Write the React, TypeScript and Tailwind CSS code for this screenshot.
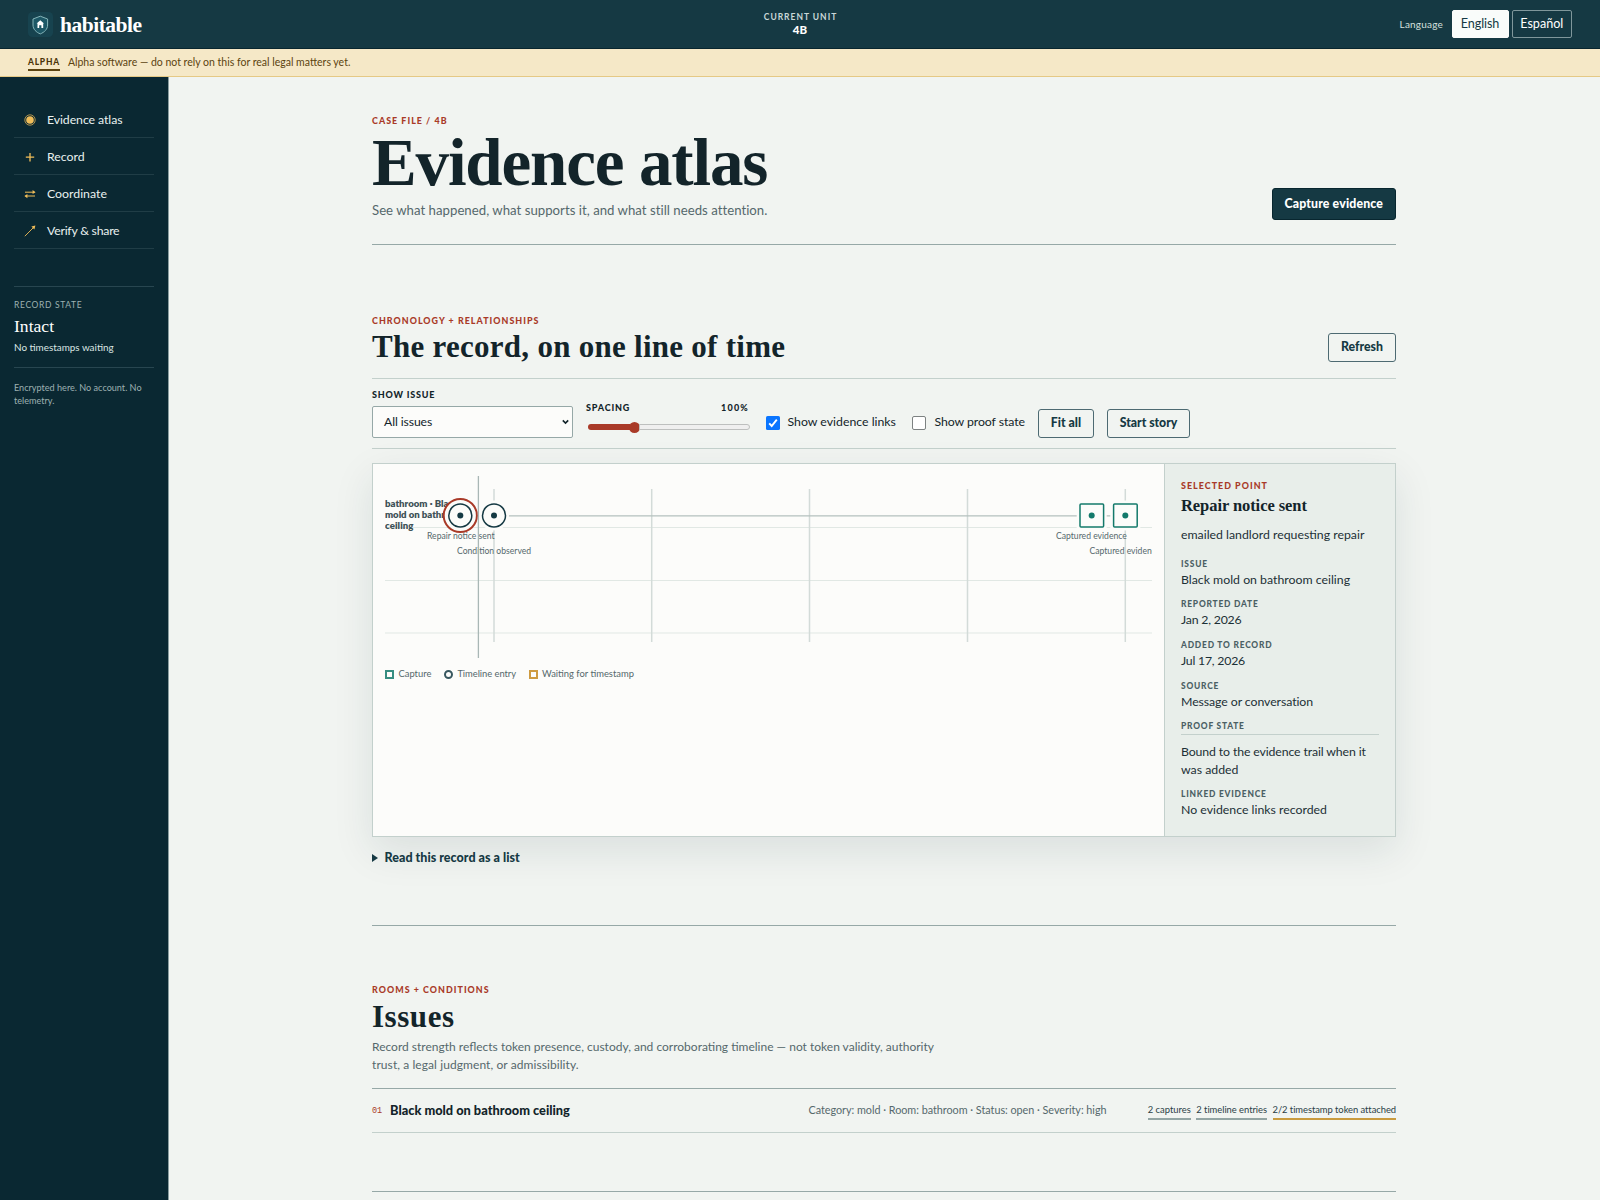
import React from "react";

const serif = "font-['Liberation_Serif',serif]";

function Eyebrow({ children, className = "" }: { children: React.ReactNode; className?: string }) {
  return (
    <p className={`h-3 text-[8.9px] leading-3 font-black tracking-[1.04px] whitespace-nowrap text-[#a93a28] uppercase ${className}`}>
      {children}
    </p>
  );
}

function Logo() {
  return (
    <svg className="size-[25px]" viewBox="0 0 25 25" fill="none">
      <rect width="25" height="25" rx="4.5" fill="#17434f" />
      <path d="M12.3 4.2 L19.6 7 V13 C19.6 17.3 16.4 20.2 12.3 21.9 C8.2 20.2 5 17.3 5 13 V7 Z" fill="#1d5866" stroke="#86b5b9" strokeWidth="1" strokeLinejoin="round" />
      <path d="M12.3 8.3 L16 11.6 H15.2 V16 H13.4 V13.2 H11.2 V16 H9.5 V11.6 H8.6 Z" fill="#fff" />
    </svg>
  );
}

function Header() {
  return (
    <header className="flex h-[49px] shrink-0 items-center justify-between border-b border-[#08262f] bg-[#153943] pr-[28px] pl-[28px] text-white">
      <div className="flex flex-1 items-center">
        <Logo />
        <span className={`ml-[7px] pt-px text-[21.5px] leading-6 font-bold tracking-[-0.5px] ${serif}`}>habitable</span>
      </div>
      <div className="flex flex-col items-center pb-[2px]">
        <span className="pl-px text-[8.5px] leading-3 font-bold tracking-[0.98px] text-[#c9d8d8]">CURRENT UNIT</span>
        <span className="text-[11.5px] leading-[13px] font-black">4B</span>
      </div>
      <div className="flex flex-1 items-center justify-end">
        <span className="mr-[8.5px] text-[10px] tracking-[0.2px] text-[#d5e0df]">Language</span>
        <button className="mr-[3px] h-7 w-[57px] rounded-[2px] border border-[#fcfcfa] bg-[#f9fcfa] pt-px text-[12.6px] tracking-[-0.1px] text-[#153943]">English</button>
        <button className="h-7 w-[60.5px] rounded-[2px] border border-[#7f979b] pt-px text-[12.6px] text-white">Español</button>
      </div>
    </header>
  );
}

const navIcons = {
  atlas: (
    <>
      <circle cx="6" cy="6" r="3.8" fill="#f0bd59" stroke="none" />
      <circle cx="6" cy="6" r="5.2" strokeWidth="0.7" />
    </>
  ),
  plus: <path d="M6 2 V10.4 M1.8 6.2 H10.2" strokeWidth="1.3" />,
  swap: (
    <>
      <path d="M1 4.2 H10.5 M11 8 H1.5" strokeWidth="1" />
      <path d="M8.6 1.9 L11.6 4.2 L8.6 6.1 Z M3.4 6.1 L0.4 8 L3.4 10.2 Z" fill="#f0bd59" stroke="none" />
    </>
  ),
  arrow: (
    <>
      <path d="M0.8 11.2 L10 2" strokeWidth="0.9" />
      <path d="M11.4 0.6 L10.4 4.6 L7.4 1.6 Z" fill="#f0bd59" stroke="none" />
    </>
  ),
};

const nav = [
  { icon: navIcons.atlas, label: "Evidence atlas", track: "tracking-[-0.08px]" },
  { icon: navIcons.plus, label: "Record", track: "" },
  { icon: navIcons.swap, label: "Coordinate", track: "" },
  { icon: navIcons.arrow, label: "Verify & share", track: "tracking-[-0.24px]" },
];

function Sidebar() {
  return (
    <aside className="w-[169px] shrink-0 border-r border-[#8a9d9f] bg-[#0a2832] px-[14px] pt-6">
      <nav>
        {nav.map((n) => (
          <a key={n.label} className="flex h-[37px] items-center border-b border-[#203d46] pt-px pl-[10px]">
            <svg className="size-3" viewBox="0 0 12 12" fill="none" stroke="#f0bd59">{n.icon}</svg>
            <span className={`ml-[11px] pt-px text-[12.3px] text-[#e9f1ef] ${n.track}`}>{n.label}</span>
          </a>
        ))}
      </nav>
      <div className="mt-[37px] h-[82px] border-y border-[#284650] pt-[11px]">
        <p className="text-[8.5px] leading-[14px] tracking-[0.64px] text-[#9db0b1]">RECORD STATE</p>
        <p className={`mt-[3px] text-[17.6px] leading-[22px] text-white ${serif}`}>Intact</p>
        <p className="mt-[3px] text-[9.9px] leading-[14px] text-[#dbe6e4]">No timestamps waiting</p>
      </div>
      <p className="mt-[13px] text-[9.1px] leading-[13px] text-[#9db0b1]">
        Encrypted here. No account. No
        <br />
        telemetry.
      </p>
    </aside>
  );
}

function OutlineButton({ children, className = "" }: { children: React.ReactNode; className?: string }) {
  return (
    <button className={`h-[29px] rounded-[3px] border border-[#4d6a72] text-[12.3px] font-black whitespace-nowrap text-[#153943] ${className}`}>
      {children}
    </button>
  );
}

function Controls() {
  return (
    <div className="flex h-[70px] items-end border-b border-[#c3d0cc] pb-[10.5px] text-[#13242a]">
      <label className="w-[201px]">
        <span className="block text-[9px] leading-3 font-black tracking-[0.8px]">SHOW ISSUE</span>
        <span className="mt-[5px] flex h-8 items-center justify-between rounded-[2px] border border-[#96a8a7] bg-[#fcfcfa] pr-[3px] pl-[11px]">
          <span className="pt-px text-[12.2px] tracking-[-0.1px]">All issues</span>
          <svg className="h-[6px] w-[7px]" viewBox="0 0 7 6" fill="none" stroke="#13242a" strokeWidth="1.6">
            <path d="M0.8 1.4 L3.5 4.1 L6.2 1.4" />
          </svg>
        </span>
      </label>
      <div className="ml-[13px] w-[164px]">
        <div className="flex justify-between pr-px text-[9px] leading-3 font-black tracking-[0.8px]">
          <span>SPACING</span>
          <span className="tracking-[1.2px]">100%</span>
        </div>
        <div className="mt-[7px] mb-[4.5px] ml-[1.5px] flex h-[12px] w-[162px] items-center">
          <div className="h-[6px] w-[42px] rounded-l-full bg-[#a93a28]" />
          <div className="-ml-px size-[11px] rounded-full bg-[#a93a28]" />
          <div className="-ml-px h-[6px] flex-1 rounded-r-full border border-[#bdbfbe] bg-[#efefef]" />
        </div>
      </div>
      <div className="mb-[7px] ml-[15.5px] flex h-4 items-center">
        <svg className="size-[14px]" viewBox="0 0 14 14" fill="none">
          <rect width="14" height="14" rx="1.6" fill="#0a75ff" />
          <path d="M3.2 7.4 L5.7 10 L10.8 3.6" stroke="#fff" strokeWidth="1.9" />
        </svg>
        <span className="ml-2 w-[109px] text-[12.3px] whitespace-nowrap">Show evidence links</span>
        <span className="ml-[15.5px] size-[14px] rounded-[2px] border border-[#7d8282] bg-white" />
        <span className="ml-[8.5px] w-[91px] text-[12.3px] tracking-[-0.08px] whitespace-nowrap">Show proof state</span>
      </div>
      <OutlineButton className="ml-[12.5px] w-[56px]">Fit all</OutlineButton>
      <OutlineButton className="ml-[13px] w-[83px] tracking-[-0.03px]">Start story</OutlineButton>
    </div>
  );
}

const columns = [109, 266.7, 424.5, 582.5, 740.3];
const lanes = [51.5, 104.5, 157];

function Timeline() {
  return (
    <svg className="block h-[182px] w-[767px] overflow-hidden" viewBox="0 0 767 182" fontFamily="Lato, sans-serif">
      {lanes.map((y) => (
        <line key={y} x1="0" x2="767" y1={y} y2={y} stroke="#e1e8e4" />
      ))}
      {columns.map((x) => (
        <line key={x} x1={x} x2={x} y1="13" y2="166" stroke="#d3dbd8" strokeWidth="1.5" />
      ))}
      <g fontSize="9.6" fontWeight="800" fill="#3f5257">
        <text x="0" y="31">bathroom · Black</text>
        <text x="0" y="42" textLength="79">mold on bathroom</text>
        <text x="0" y="53" textLength="28.5">ceiling</text>
      </g>
      <line x1="75" x2="740" y1="39.8" y2="39.8" stroke="#b4c1be" strokeWidth="1.3" />
      <circle cx="75.3" cy="39.5" r="16.6" fill="#fcfcfa" stroke="#a93a28" strokeWidth="2" />
      <circle cx="109" cy="39.5" r="15" fill="#fcfcfa" />
      <g fill="#fcfcfa">
        <rect x="691.7" y="24.5" width="30" height="30" />
        <rect x="725.3" y="24.5" width="30" height="30" />
      </g>
      <g stroke="#153943" strokeWidth="1.5" fill="none">
        <circle cx="75.3" cy="39.5" r="11.5" />
        <circle cx="109" cy="39.5" r="11.5" />
      </g>
      <g stroke="#13796b" strokeWidth="1.5" fill="none">
        <rect x="695" y="28" width="23.6" height="23" rx="1" />
        <rect x="728.6" y="28" width="23.6" height="23" rx="1" />
      </g>
      <circle cx="75.3" cy="39.5" r="3" fill="#153943" />
      <circle cx="109" cy="39.5" r="3" fill="#153943" />
      <circle cx="706.7" cy="39.5" r="3" fill="#13796b" />
      <circle cx="740.3" cy="39.5" r="3" fill="#13796b" />
      <g fontSize="8.6" fill="#55686c">
        <text x="42" y="62.8">Repair notice sent</text>
        <text x="72" y="77.5">Condition observed</text>
        <text x="671" y="62.8">Captured evidence</text>
        <text x="704.5" y="77.5">Captured evidence</text>
      </g>
      <line x1="93.4" x2="93.4" y1="0" y2="182" stroke="#a9b7b5" strokeWidth="1.3" />
    </svg>
  );
}

const details = [
  { label: "ISSUE", value: "Black mold on bathroom ceiling", track: "" },
  { label: "REPORTED DATE", value: "Jan 2, 2026", track: "tracking-[-0.2px]" },
  { label: "ADDED TO RECORD", value: "Jul 17, 2026", track: "tracking-[-0.22px]" },
  { label: "SOURCE", value: "Message or conversation", track: "tracking-[-0.08px]" },
];

function Detail({ label, value, track = "" }: { label: string; value: string; track?: string }) {
  return (
    <div className="h-[40.7px]">
      <dt className="text-[8.4px] leading-3 font-black tracking-[0.8px] text-[#4b6064]">{label}</dt>
      <dd className={`text-[12.3px] leading-[20px] whitespace-nowrap text-[#1c3036] ${track}`}>{value}</dd>
    </div>
  );
}

function Panel() {
  return (
    <div className="mt-[14px] flex h-[374px] border border-[#c3d0cc] bg-[#fcfcfa] shadow-[0_14px_38px_rgba(15,50,60,0.10)]">
      <div className="flex-1 px-3 pt-[11.5px]">
        <Timeline />
        <div className="mt-[11px] flex h-3 items-center text-[9.4px] text-[#55686c]">
          <span className="size-[9px] border-2 border-[#13796b]/85" />
          <span className="mr-[12.5px] ml-[4.5px]">Capture</span>
          <span className="size-[9px] rounded-full border-2 border-[#153943]/85" />
          <span className="mr-[12.5px] ml-[4.5px] tracking-[-0.04px]">Timeline entry</span>
          <span className="size-[9px] border-2 border-[#c58a1f]/85" />
          <span className="ml-[4.5px]">Waiting for timestamp</span>
        </div>
      </div>
      <aside className="w-[233px] border-l border-[#c3d0cc] bg-[#e8eeea] px-4 pt-4">
        <Eyebrow>Selected point</Eyebrow>
        <h3 className={`mt-[3px] text-[16.5px] leading-[22px] font-bold tracking-[-0.07px] text-[#13242a] ${serif}`}>Repair notice sent</h3>
        <p className="mt-[8.5px] text-[12.3px] leading-[18px] whitespace-nowrap text-[#1c3036]">emailed landlord requesting repair</p>
        <dl className="mt-[14px]">
          {details.map((d) => (
            <Detail key={d.label} {...d} />
          ))}
          <dt className="h-[15px] border-b border-[#c3d0cc] text-[8.4px] leading-3 font-black tracking-[0.8px] text-[#4b6064]">PROOF STATE</dt>
          <dd className="mt-2 mb-[9px] text-[12.3px] leading-[18px] whitespace-nowrap text-[#1c3036]">
            <span className="tracking-[-0.13px]">Bound to the evidence trail when it</span>
            <br />
            was added
          </dd>
          <Detail label="LINKED EVIDENCE" value="No evidence links recorded" />
        </dl>
      </aside>
    </div>
  );
}

function Issues() {
  return (
    <section className="border-t border-[#96a8a7] pt-[58px]">
      <Eyebrow>Rooms + conditions</Eyebrow>
      <h2 className={`mt-[2.5px] text-[31px] leading-[35px] font-bold tracking-[0.55px] text-[#13242a] ${serif}`}>Issues</h2>
      <p className="mt-[4.5px] text-[12px] leading-[18px] whitespace-nowrap text-[#55686c]">
        Record strength reflects token presence, custody, and corroborating timeline — not token validity, authority
        <br />
        <span className="tracking-[0.08px]">trust, a legal judgment, or admissibility.</span>
      </p>
      <div className="mt-[14px] flex h-[45px] items-center border-t border-b border-t-[#96a8a7] border-b-[#c3d0cc]">
        <span className="w-[18px] pt-[2px] font-['Liberation_Mono',monospace] text-[8.5px] text-[#a93a28]">01</span>
        <span className="w-[418.5px] text-[12.8px] font-black text-[#13242a]">Black mold on bathroom ceiling</span>
        <span className="text-[10.8px] tracking-[-0.02px] whitespace-nowrap text-[#55686c]">Category: mold · Room: bathroom · Status: open · Severity: high</span>
        <div className="mt-[2px] ml-auto flex gap-[5.5px] text-[9.4px] leading-[14px] whitespace-nowrap text-[#2b4046]">
          <span className="border-b-2 border-[#93a5a4] pb-px">2 captures</span>
          <span className="border-b-2 border-[#93a5a4] pb-px tracking-[-0.03px]">2 timeline entries</span>
          <span className="border-b-2 border-[#c99b3f] pb-px tracking-[-0.05px]">2/2 timestamp token attached</span>
        </div>
      </div>
    </section>
  );
}

export default function App() {
  return (
    <div className="flex h-[1200px] w-[1600px] flex-col overflow-hidden bg-[#f1f4f1] font-[Lato,sans-serif]">
      <Header />
      <div className="flex h-7 shrink-0 items-center border-b border-[#e5c985] bg-[#f5e8c7] pl-7 text-[#5c4410]">
        <span className="mt-px mr-[8px] border-b-2 border-[#5c4410] text-[8.4px] leading-[13px] font-black tracking-[0.8px] text-[#4a3408]">ALPHA</span>
        <span className="text-[10.5px]">Alpha software — do not rely on this for real legal matters yet.</span>
      </div>
      <div className="flex min-h-0 flex-1">
        <Sidebar />
        <main className="flex flex-1 justify-center pr-px">
          <div className="w-[1024px] pt-[38px]">
            <div className="flex items-end justify-between border-b border-[#96a8a7] pb-6">
              <div>
                <Eyebrow>Case file / 4B</Eyebrow>
                <h1 className={`pt-px text-[67px] leading-[68px] font-bold tracking-[-1.15px] text-[#13242a] ${serif}`}>Evidence atlas</h1>
                <p className="mt-1 text-[13.2px] leading-5 tracking-[0.02px] text-[#55686c]">See what happened, what supports it, and what still needs attention.</p>
              </div>
              <button className="h-[32.5px] w-[124.5px] rounded-[3px] border border-[#08262f] bg-[#153943] text-[12.3px] font-black tracking-[0.15px] text-white">Capture evidence</button>
            </div>
            <section>
              <div className="mt-[70px] flex items-end justify-between border-b border-[#c3d0cc] pb-[14px]">
                <div>
                  <Eyebrow>Chronology + relationships</Eyebrow>
                  <h2 className={`mt-[2px] text-[31px] leading-[35px] font-bold tracking-[0.27px] text-[#13242a] ${serif}`}>The record, on one line of time</h2>
                </div>
                <OutlineButton className="mb-[2px] w-[68px]">Refresh</OutlineButton>
              </div>
              <Controls />
              <Panel />
              <div className="mt-[13px] mb-[59px] flex h-4 items-center text-[12.5px] font-black tracking-[0.03px] text-[#153943]">
                <svg className="mr-[6.5px] h-[8px] w-[6px]" viewBox="0 0 6 8">
                  <path d="M0 0 L6 4 L0 8 Z" fill="#153943" />
                </svg>
                Read this record as a list
              </div>
            </section>
            <Issues />
            <div className="mt-[58px] border-t border-[#96a8a7]" />
          </div>
        </main>
      </div>
    </div>
  );
}
